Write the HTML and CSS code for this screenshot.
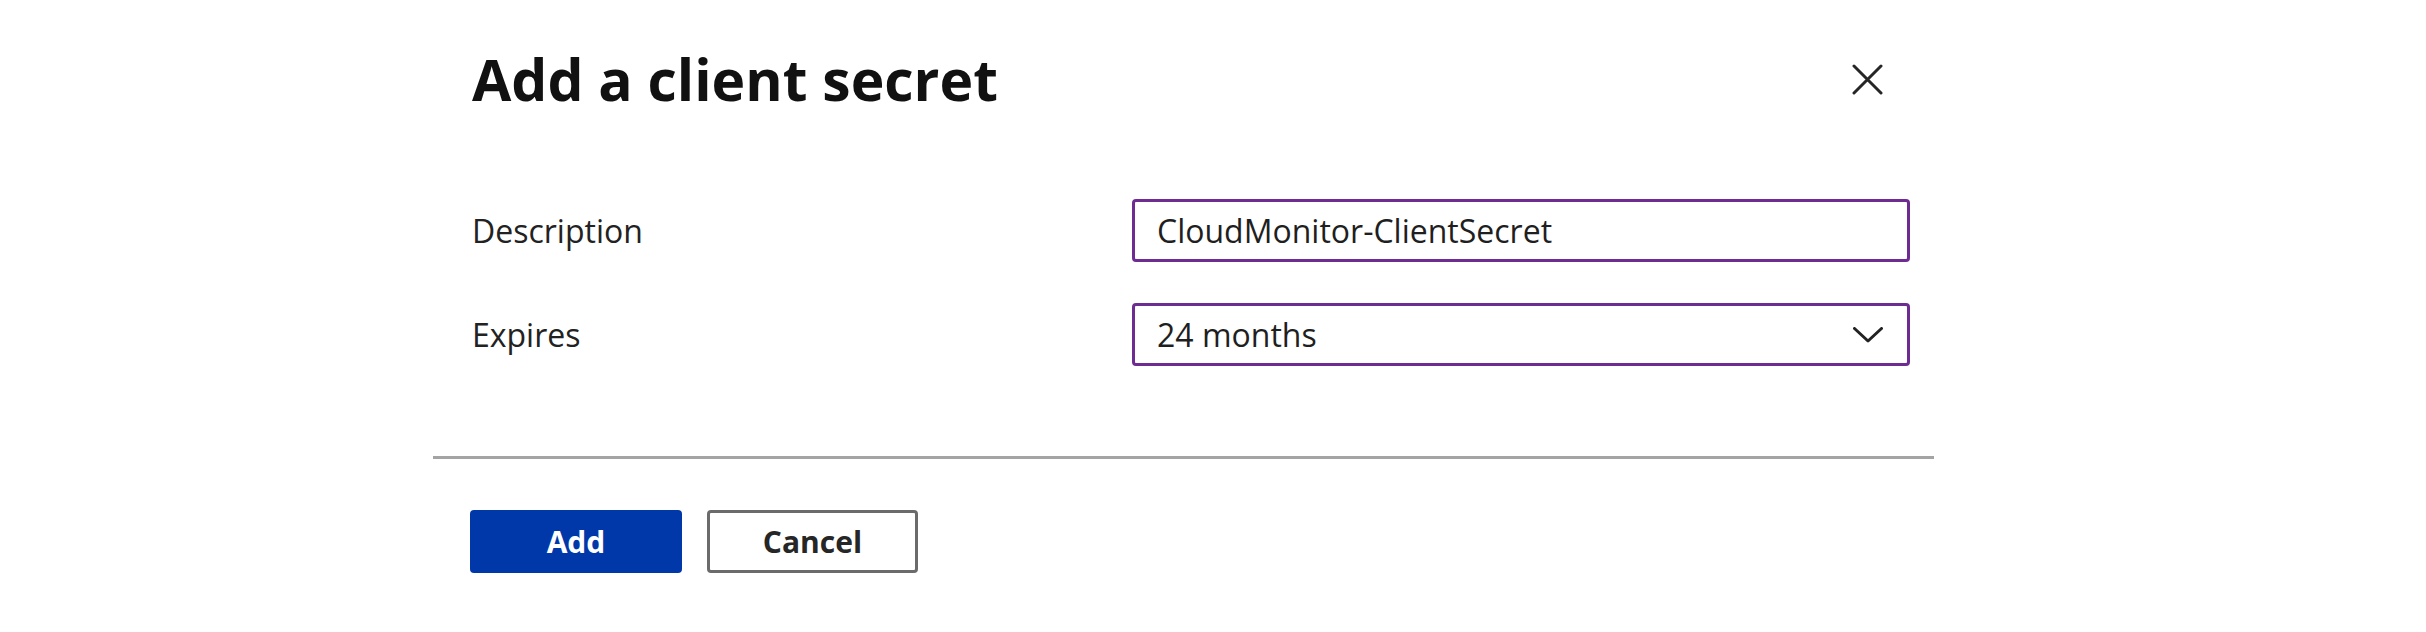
FILE: index.html
```html
<!DOCTYPE html>
<html lang="en">
<head>
    <meta charset="UTF-8">
    <meta name="viewport" content="width=device-width, initial-scale=1.0">
    <title>Add a client secret</title>
    <link rel="stylesheet" href="styles.css">
</head>
<body>
    <div class="dialog">
        <div class="dialog-header">
            <h1 class="dialog-title">Add a client secret</h1>
            <button class="close-btn" aria-label="Close">
                <svg width="31" height="31" viewBox="0 0 31 31">
                    <path d="M2 2 L29 29 M29 2 L2 29" stroke="#262626" stroke-width="3" stroke-linecap="round" fill="none"/>
                </svg>
            </button>
        </div>

        <div class="dialog-body">
            <label class="field-label" for="description">Description</label>
            <input class="text-input" id="description" type="text" value="CloudMonitor-ClientSecret">

            <label class="field-label">Expires</label>
            <div class="dropdown">
                <span>24 months</span>
                <svg width="30" height="16" viewBox="0 0 30 16">
                    <path d="M1.5 1.5 L15 14 L28.5 1.5" stroke="#222" stroke-width="3" stroke-linecap="round" stroke-linejoin="round" fill="none"/>
                </svg>
            </div>
        </div>

        <div class="dialog-footer">
            <button class="btn btn-primary">Add</button>
            <button class="btn btn-default">Cancel</button>
        </div>
    </div>
</body>
</html>
```

FILE: styles.css
```css
body {
    margin: 0;
    background-color: #ffffff;
    font-family: "Open Sans", "Noto Sans", Arial, sans-serif;
    color: #242424;
}

.dialog {
    margin-left: 433px;
    width: 1501px;
}

.dialog-header {
    display: flex;
    justify-content: space-between;
    align-items: center;
    padding: 51px 51px 0 39px;
}

.dialog-title {
    margin: 0;
    font-size: 57px;
    line-height: 57px;
    font-weight: 700;
    color: #111111;
}

.close-btn {
    display: flex;
    padding: 0;
    border: none;
    background: none;
    cursor: pointer;
}

.dialog-body {
    display: grid;
    grid-template-columns: 660px 1fr;
    row-gap: 41px;
    align-items: center;
    padding: 91px 24px 90px 39px;
}

.field-label {
    font-size: 32px;
    color: #222222;
}

.text-input,
.dropdown {
    box-sizing: border-box;
    width: 100%;
    height: 63px;
    border: 3px solid #6e2b92;
    border-radius: 4px;
    padding: 0 24px 0 22px;
    font-family: inherit;
    font-size: 32px;
    color: #1f1f1f;
    background: #ffffff;
    outline: none;
}

.dropdown {
    display: flex;
    justify-content: space-between;
    align-items: center;
}

.dialog-footer {
    display: flex;
    gap: 25px;
    border-top: 3px solid #a4a4a4;
    padding: 51px 0 0 37px;
}

.btn {
    box-sizing: border-box;
    width: 212px;
    height: 63px;
    border-radius: 4px;
    font-family: inherit;
    font-size: 30px;
    font-weight: 700;
    cursor: pointer;
}

.btn-primary {
    background-color: #0037a9;
    border: none;
    color: #ffffff;
}

.btn-default {
    width: 211px;
    background-color: #ffffff;
    border: 3px solid #6b6b6b;
    color: #262626;
}
```
